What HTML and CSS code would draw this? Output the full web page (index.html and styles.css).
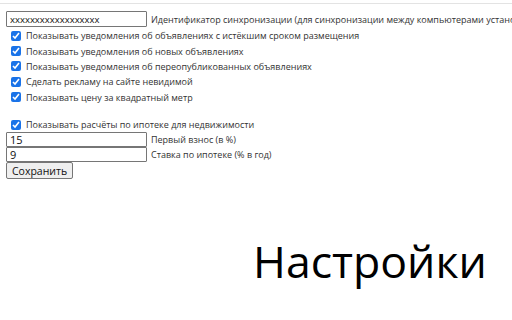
FILE: index.html
```html
<!DOCTYPE html>
<html lang="ru">
<head>
<meta charset="utf-8">
<link rel="stylesheet" href="styles.css">
</head>
<body>
<div class="topline"></div>
<div class="form">
  <div class="row"><input class="txt" type="text" value="xxxxxxxxxxxxxxxxxx"><span class="lbl">Идентификатор синхронизации (для синхронизации между компьютерами установленных приложений)</span></div>
  <label class="chk first"><input type="checkbox" checked><span>Показывать уведомления об объявлениях с истёкшим сроком размещения</span></label>
  <label class="chk"><input type="checkbox" checked><span>Показывать уведомления об новых объявлениях</span></label>
  <label class="chk"><input type="checkbox" checked><span>Показывать уведомления об переопубликованных объявлениях</span></label>
  <label class="chk"><input type="checkbox" checked><span>Сделать рекламу на сайте невидимой</span></label>
  <label class="chk"><input type="checkbox" checked><span>Показывать цену за квадратный метр</span></label>
  <div class="spacer"></div>
  <label class="chk"><input type="checkbox" checked><span>Показывать расчёты по ипотеке для недвижимости</span></label>
  <div class="row"><input class="txt num" type="text" value="15"><span class="lbl">Первый взнос (в %)</span></div>
  <div class="row"><input class="txt num" type="text" value="9"><span class="lbl">Ставка по ипотеке (% в год)</span></div>
  <div class="row"><button class="btn">Сохранить</button></div>
</div>
<div class="title">Настройки</div>
</body>
</html>
```
FILE: styles.css
```css
html, body {
  margin: 0;
  padding: 0;
  background: #fff;
  width: 512px;
  height: 320px;
  overflow: hidden;
}
body {
  font-family: "Open Sans", "Noto Sans", sans-serif;
  font-size: 9px;
  color: #333;
}
.topline {
  margin-top: 3px;
  height: 1px;
  background: #e3e3e3;
}
.form {
  padding: 7px 0 0 6px;
  display: flex;
  flex-direction: column;
  align-items: flex-start;
  overflow: hidden;
}
.row {
  display: flex;
  align-items: center;
  white-space: nowrap;
}
.txt {
  box-sizing: border-box;
  width: 141px;
  height: 16px;
  margin: 0;
  padding: 0 3px;
  border: 1px solid #767676;
  border-radius: 1px;
  font-family: "Open Sans", sans-serif;
  font-size: 9.5px;
  color: #111;
  outline: none;
}
.num {
  font-size: 11px;
  height: 15px;
}
.lbl {
  margin-left: 4px;
}
.chk {
  display: flex;
  align-items: center;
  height: 15.4px;
  white-space: nowrap;
}
.chk.first {
  margin-top: 1px;
}
.chk input {
  width: 10px;
  height: 10px;
  margin: 0 5px 0 5px;
  accent-color: #1a73e8;
}
.spacer {
  height: 12px;
}
.btn {
  box-sizing: border-box;
  height: 17px;
  margin: 0;
  padding: 0 5px;
  font-family: "Open Sans", sans-serif;
  font-size: 10.5px;
  color: #111;
  background: #efefef;
  border: 1px solid #767676;
  border-radius: 2px;
}
.title {
  margin: 60px 0 0 253px;
  font-family: "Open Sans", sans-serif;
  font-size: 44.6px;
  line-height: 1;
  color: #000;
}
```
